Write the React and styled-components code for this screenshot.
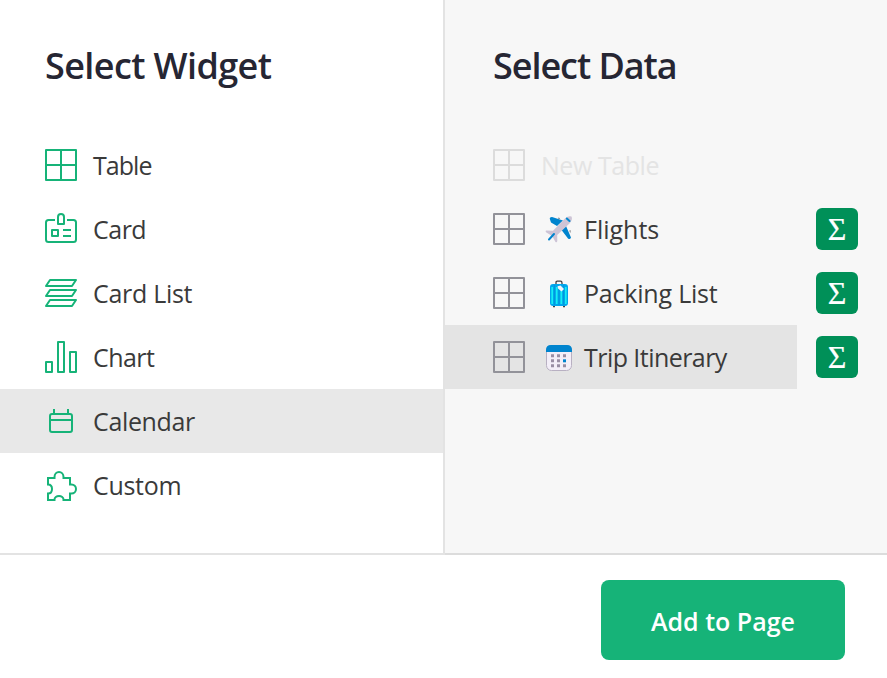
import React from "react";
import styled, { createGlobalStyle } from "styled-components";

const GlobalStyle = createGlobalStyle`
  *, *::before, *::after { box-sizing: border-box; }
  body {
    margin: 0;
    background: #fff;
    font-family: "Open Sans", "Noto Sans", sans-serif;
    overflow: hidden;
  }
`;

const Dialog = styled.div`
  display: flex;
  flex-direction: column;
  width: 887px;
  height: 678px;
  background: #fff;
`;

const Panels = styled.div`
  display: grid;
  grid-template-columns: 445px 1fr;
  height: 555px;
`;

const Panel = styled.section`
  min-width: 0;
  background: ${(p) => (p.$muted ? "#f7f7f7" : "#fff")};
  border-right: ${(p) => (p.$muted ? "none" : "2px solid #e3e3e3")};
  border-bottom: 2px solid ${(p) => (p.$muted ? "#dcdcdc" : "#e3e3e3")};
`;

const Title = styled.h2`
  margin: 0;
  height: 133px;
  padding: 41px 0 0 ${(p) => p.$inset}px;
  font-size: 36px;
  line-height: 49px;
  font-weight: 550;
  letter-spacing: ${(p) => p.$tracking}px;
  color: #262633;
  white-space: nowrap;
`;

const Row = styled.div`
  display: flex;
  align-items: center;
  height: 64px;
`;

const Option = styled.div`
  display: flex;
  align-items: center;
  width: ${(p) => p.$width};
  height: 64px;
  padding-left: ${(p) => p.$inset}px;
  background: ${(p) => (p.$selected ? p.$highlight : "transparent")};
  color: ${(p) => (p.$disabled ? "#e4e4e4" : "#3a3a3a")};
`;

const Icon = styled.svg`
  display: block;
  flex: none;
  width: 32px;
  height: 32px;
  fill: none;
  stroke: ${(p) => p.$color};
  stroke-width: 2;
  stroke-linejoin: round;
`;

const Emoji = styled.svg`
  display: block;
  flex: none;
  width: 28px;
  height: 28px;
  margin-left: 20px;
  margin-top: ${(p) => p.$drop}px;
`;

const Label = styled.span`
  margin-left: ${(p) => p.$gap}px;
  font-size: 25px;
  line-height: 34px;
  letter-spacing: ${(p) => p.$tracking}px;
  white-space: nowrap;
`;

const SummaryButton = styled.button`
  display: flex;
  align-items: center;
  justify-content: center;
  width: 42px;
  height: 42px;
  margin-left: 19px;
  padding: 0;
  border: 0;
  border-radius: 6px;
  background: #009058;
  color: #fff;
  font: 32px/42px "Liberation Serif", serif;
  -webkit-text-stroke: 0.2px #fff;
`;

const Footer = styled.footer`
  display: flex;
  justify-content: flex-end;
  padding: 25px 42px 0 0;
`;

const AddButton = styled.button`
  width: 244px;
  height: 80px;
  padding: 1px 0 0;
  border: 0;
  border-radius: 8px;
  background: #16b378;
  color: #fff;
  font: 650 25px/34px "Open Sans", sans-serif;
  letter-spacing: 0;
`;

const TableGlyph = () => (
  <path d="M1 1H31V31H1ZM16 1V31M1 16H31" />
);

const widgetGlyphs = {
  table: <TableGlyph />,
  card: (
    <>
      <path d="M10 7H3.5Q1 7 1 9.5V26.5Q1 29 3.5 29H28.5Q31 29 31 26.5V9.5Q31 7 28.5 7H22" />
      <path d="M13 11V4Q13 1 16 1T19 4V11Z" />
      <path d="M7 17H13V23H7ZM18 17H26M18 23H26" />
    </>
  ),
  cardList: (
    <path d="M5 3H31L27 9H1ZM5 13H31L27 19H1ZM5 23H31L27 29H1Z" />
  ),
  chart: <path d="M1 21H7V31H1ZM13 1H19V31H13ZM25 11H31V31H25Z" />,
  calendar: (
    <>
      <rect x="5" y="9" width="22" height="18" rx="2" />
      <path d="M9 4V9M23 4V9M5 15H27" />
    </>
  ),
  custom: (
    <path
      strokeLinejoin="miter"
      d="M3 9H9.5V8C9.5 5 11.5 3 14 3S18.500 5 18.500 8V9H25V15.500H26.500C29 15.500 31 17.300 31 20S29 24.500 26.500 24.500H25V31H18.500V30.500C18.500 28.500 16.500 27 14 27S9.500 28.500 9.500 30.500V31H3V24.500C5.500 24.500 7 22.500 7 20S5.500 15.500 3 15.500Z"
    />
  ),
};

const emojis = {
  flights: (
    <>
      <path d="M5 4.500Q4 2 7 2L18 5.500L12 11L6 7.500ZM21 11L26 22.500Q25 25 23 23.500L16.500 15Z" fill="#0084ce" />
      <path d="M13 3.800V2.500L15 3V4.500M24.500 17V15L26 15.500L25.500 18" fill="#9b9b9f" />
      <path d="M26.500 1.500Q23.500 0.500 20 3.500L8 15.800L1.200 15.500Q0 15.600 1 17.200L5.500 20L8 22.500L10.500 27Q12 28 12.300 26L12.200 20L24.500 8.500Q28 4.500 26.500 1.500Z" fill="#cdc4d6" />
      <path d="M4 24.500L9 19" stroke="#0084ce" strokeWidth="2" strokeLinecap="round" />
      <path d="M21.800 3.500L24.500 6" stroke="#008ad0" strokeWidth="2" strokeLinecap="round" />
    </>
  ),
  luggage: (
    <>
      <path d="M11 5V2.500Q11 1.200 12.300 1.200H15.500Q17 1.200 17 3V5" fill="none" stroke="#424044" strokeWidth="1.300" />
      <path d="M9 25V27.300M19 25V27.300" stroke="#424044" strokeWidth="2" />
      <rect x="5" y="4" width="18" height="22" rx="3" fill="#00a6ed" />
      <path d="M7.200 7V24M11.700 7V24M16.300 10V24M20.800 7V24" stroke="#16eef4" strokeWidth="1.700" />
      <path d="M9.400 5V25M14 5V25M18.600 5V25" stroke="#008fd3" strokeWidth="0.700" />
      <path d="M12.500 6.300L15.500 5.500L19 9L16.500 11.500L13 8.500Z" fill="#eef4f9" />
    </>
  ),
  calendar: (
    <>
      <rect x="1.500" y="1.500" width="25" height="25" rx="5" fill="#f3eef8" stroke="#b8b0c2" />
      <path d="M1 8V6Q1 1 6 1H22Q27 1 27 6V8Z" fill="#0084ce" />
      <path d="M6 10.300H9V13.300H6ZM12 10.300H15V13.300H12ZM18 10.300H21V13.300H18ZM6 15.300H9V18.300H6ZM12 15.300H15V18.300H12ZM6 20.300H9V23.300H6ZM12 20.300H15V23.300H12ZM18 20.300H21V23.300H18Z" fill="#998ea4" />
      <path d="M18 15.300H21V18.300H18Z" fill="#0084ce" />
    </>
  ),
};

const widgets = [
  { label: "Table", glyph: "table", tracking: -0.95 },
  { label: "Card", glyph: "card", tracking: -0.5 },
  { label: "Card List", glyph: "cardList", tracking: -0.3 },
  { label: "Chart", glyph: "chart", tracking: -0.55 },
  { label: "Calendar", glyph: "calendar", tracking: -0.35 },
  { label: "Custom", glyph: "custom", tracking: -0.3 },
];

const tables = [
  { label: "New Table", disabled: true, tracking: -0.45 },
  { label: "Flights", emoji: "flights", tracking: 0 },
  { label: "Packing List", emoji: "luggage", tracking: -0.2 },
  { label: "Trip Itinerary", emoji: "calendar", tracking: -0.55 },
];

const selectedWidget = "Calendar";
const selectedTable = "Trip Itinerary";

export default function App() {
  return (
    <>
      <GlobalStyle />
      <Dialog>
        <Panels>
          <Panel>
            <Title $inset={45} $tracking={-0.6}>Select Widget</Title>
            {widgets.map((w) => (
              <Option key={w.label} $width="100%" $inset={45} $selected={w.label === selectedWidget} $highlight="#e8e8e8">
                <Icon viewBox="0 0 32 32" $color="#16b378">{widgetGlyphs[w.glyph]}</Icon>
                <Label $gap={16} $tracking={w.tracking}>{w.label}</Label>
              </Option>
            ))}
          </Panel>
          <Panel $muted>
            <Title $inset={48} $tracking={-1.05}>Select Data</Title>
            {tables.map((t) => (
              <Row key={t.label}>
                <Option $width="352px" $inset={48} $selected={t.label === selectedTable} $highlight="#e4e4e4" $disabled={t.disabled}>
                  <Icon viewBox="0 0 32 32" $color={t.disabled ? "#dcdcdc" : "#929299"}><TableGlyph /></Icon>
                  {t.emoji && <Emoji viewBox="0 0 28 28" $drop={t.emoji === "flights" ? 0 : 2}>{emojis[t.emoji]}</Emoji>}
                  <Label $gap={t.emoji ? 11 : 16} $tracking={t.tracking}>{t.label}</Label>
                </Option>
                {t.emoji && <SummaryButton>Σ</SummaryButton>}
              </Row>
            ))}
          </Panel>
        </Panels>
        <Footer>
          <AddButton>Add to Page</AddButton>
        </Footer>
      </Dialog>
    </>
  );
}
